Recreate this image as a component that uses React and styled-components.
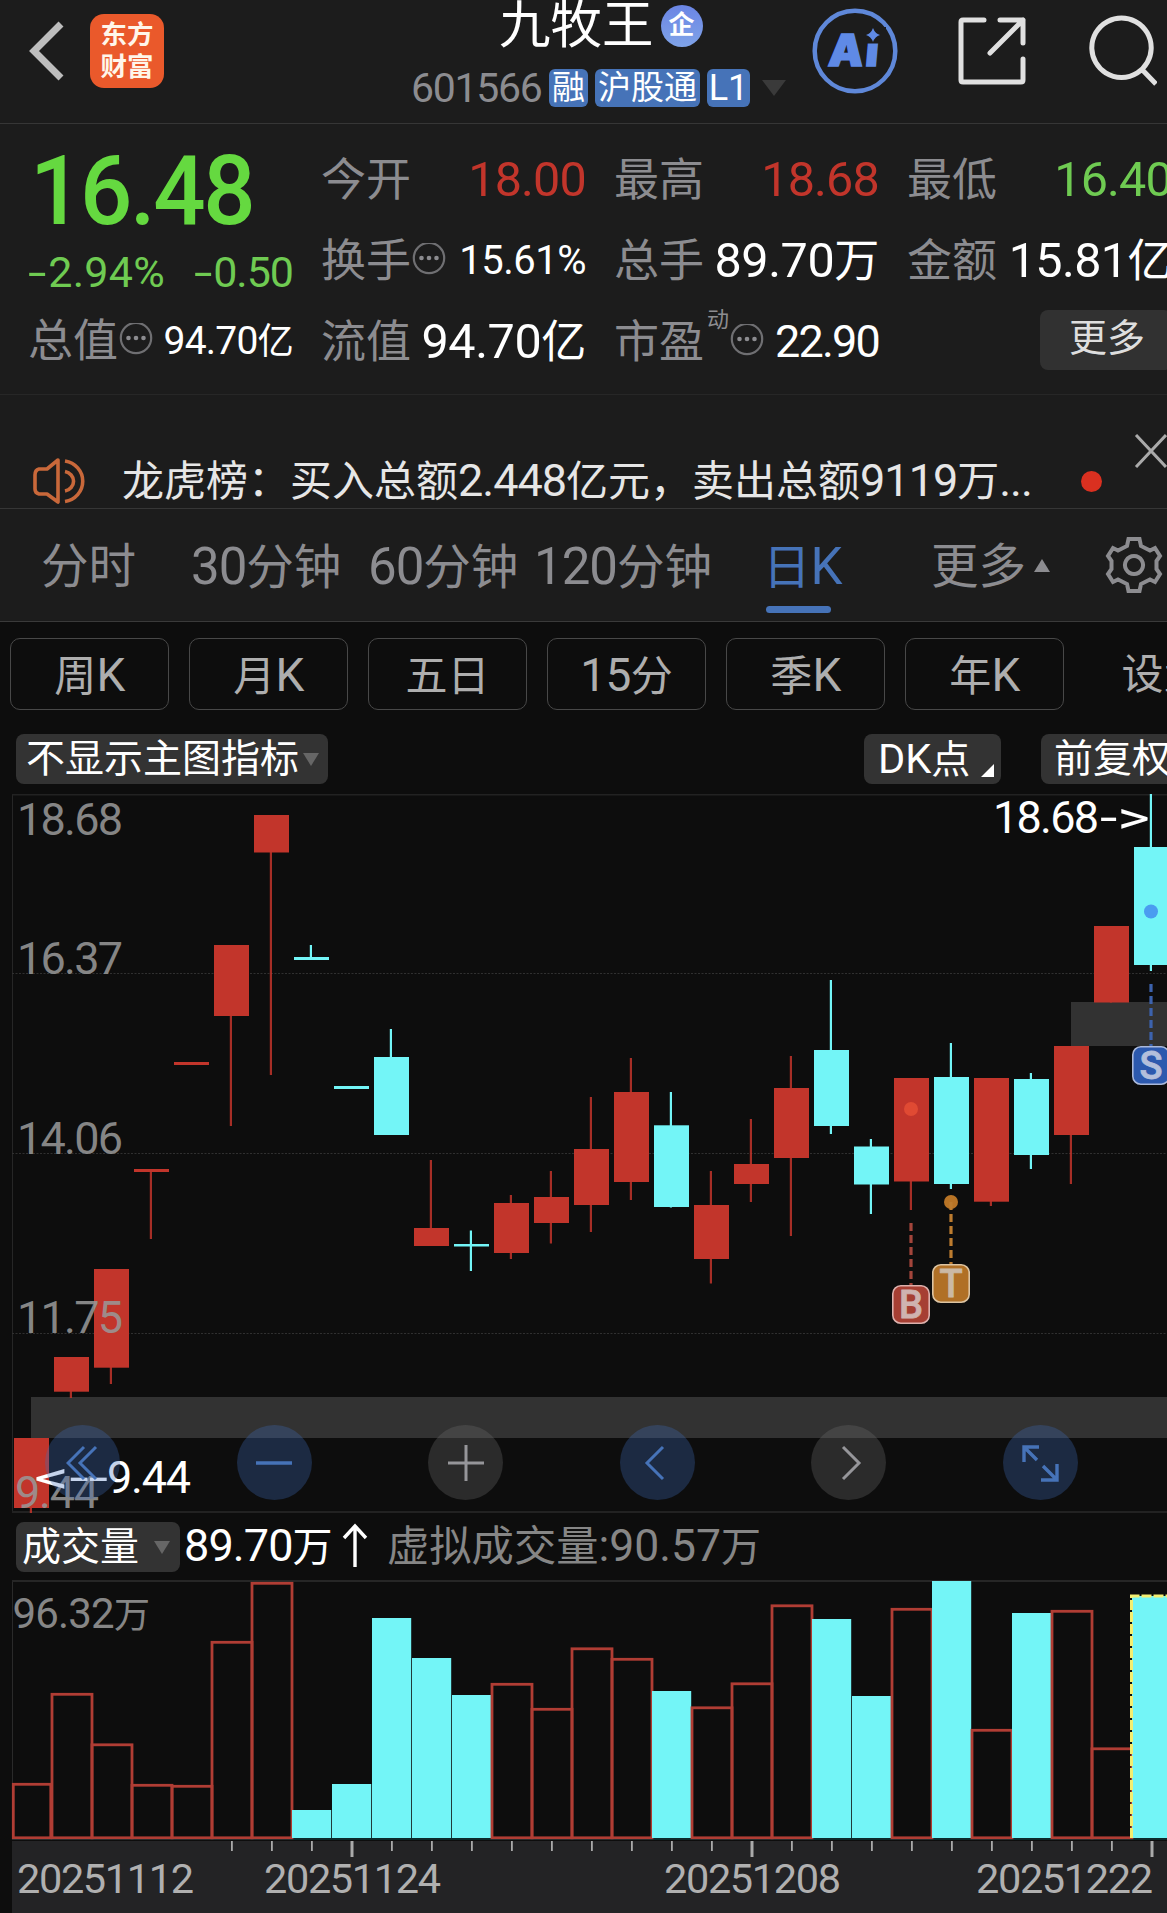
import React from "react";
import styled, { createGlobalStyle } from "styled-components";

const RED = "#c2352b";
const CYAN = "#73f5f7";
const BLUE = "#4673b8";
const GREY = "#8c8c90";
const FONT = `"Roboto", "Noto Sans CJK SC", sans-serif`;

const Global = createGlobalStyle`
  * { box-sizing: border-box; }
  html, body { margin: 0; padding: 0; background: #0d0d0d; }
  body { font-family: ${FONT}; overflow: hidden; }
  svg { display: block; flex: none; }
`;

const Screen = styled.div`
  width: 1167px;
  height: 1913px;
  overflow: hidden;
  display: flex;
  flex-direction: column;
  background: #0d0d0d;
  white-space: nowrap;
`;

/* ---------- header ---------- */
const Header = styled.header`
  height: 124px;
  flex: none;
  display: flex;
  background: #1c1c1c;
  border-bottom: 1px solid #363636;
`;
const HeaderLeft = styled.div`
  width: 412px;
  height: 102px;
  padding-left: 26px;
  display: flex;
  align-items: center;
  gap: 24px;
`;
const BrandLogo = styled.div`
  width: 74px;
  height: 74px;
  border-radius: 14px;
  background: #ea592b;
  color: #fff6ea;
  font: 700 26.5px/32px "Noto Sans CJK SC", sans-serif;
  display: flex;
  flex-direction: column;
  align-items: center;
  justify-content: center;
  padding-bottom: 4px;
`;
const TitleBlock = styled.div`
  width: 390px;
  display: flex;
  flex-direction: column;
`;
const TitleRow = styled.div`
  height: 52px;
  padding-left: 87px;
  display: flex;
  align-items: center;
  color: #fff;
  font-size: 51.5px;
  line-height: 52px;
`;
const VerifiedBadge = styled.span`
  width: 42px;
  height: 42px;
  margin-left: 7px;
  border-radius: 50%;
  background: linear-gradient(#6b85e4, #7fa3e8);
  font-size: 26px;
  font-weight: 700;
  line-height: 40px;
  text-align: center;
`;
const CodeRow = styled.div`
  height: 38px;
  margin-top: 17px;
  display: flex;
  align-items: center;
  gap: 7px;
`;
const Code = styled.span`
  width: 130px;
  color: ${GREY};
  font-size: 41px;
  line-height: 36px;
  letter-spacing: -1.3px;
  text-indent: -1px;
`;
const Tag = styled.span`
  height: 38px;
  width: ${(p) => p.$w}px;
  border-radius: 6px;
  background: ${BLUE};
  color: #fff;
  font-size: ${(p) => p.$size || 33}px;
  line-height: 38px;
  text-align: center;
`;
const HeaderIcons = styled.div`
  height: 102px;
  display: flex;
  align-items: center;
  gap: 59px;
  padding-left: 10px;
`;

/* ---------- quote ---------- */
const Quote = styled.section`
  height: 271px;
  flex: none;
  display: grid;
  grid-template-columns: repeat(4, 265px);
  column-gap: 28px;
  padding: 15px 0 0 28px;
  background: #1c1c1c;
  border-bottom: 1px solid #272727;
`;
const QuoteColumn = styled.div`
  display: flex;
  flex-direction: column;
`;
const Price = styled.div`
  height: 101px;
  padding-left: 2px;
  color: #65d940;
  font-size: 97px;
  font-weight: 500;
  line-height: 105px;
  letter-spacing: -2.5px;
  transform: scaleX(0.95);
  transform-origin: left;
`;
const Changes = styled.div`
  height: 61px;
  display: flex;
  justify-content: space-between;
  align-items: center;
  color: #6fcb52;
  font-size: 43px;
  padding: 3px 0 0 0;
`;
const Change = styled.span`
  letter-spacing: ${(p) => p.$ls}px;
`;
const Hyphen = styled.span`
  display: inline-block;
  transform: scaleX(1.55);
  transform-origin: left;
  margin-right: 8px;
`;
const Cell = styled.div`
  height: ${(p) => p.$h || 81}px;
  display: flex;
  align-items: center;
  line-height: 60px;
`;
const Label = styled.span`
  color: ${GREY};
  font-size: 45px;
  padding-top: 2px;
  margin-right: ${(p) => p.$mr || 0}px;
`;
const Value = styled.span`
  margin-left: auto;
  color: ${(p) => p.$color || "#fff"};
  font-size: ${(p) => p.$size || 48.5}px;
  letter-spacing: ${(p) => p.$ls ?? -0.8}px;
  padding-top: 1px;
`;
const Unit = styled.span`
  font-size: 0.93em;
`;
const Sup = styled.span`
  align-self: flex-start;
  margin: -3px 1px 0 3px;
  color: ${GREY};
  font-size: 22px;
  line-height: 44px;
`;
const MoreButton = styled.div`
  width: 150px;
  height: 60px;
  margin: -3px 0 0 133px;
  padding-left: 29px;
  border-radius: 8px;
  background: #313131;
  color: #dedede;
  font-size: 38px;
  line-height: 57px;
`;

/* ---------- notice ---------- */
const Notice = styled.section`
  height: 114px;
  flex: none;
  display: flex;
  padding: 58px 0 0 31px;
  background: #1c1c1c;
  border-bottom: 1px solid #363636;
`;
const NoticeText = styled.div`
  width: 930px;
  flex: none;
  margin-left: 33px;
  height: 56px;
  color: #e6e6e6;
  font-size: 42px;
  line-height: 55px;
`;
const NoticeNum = styled.span`
  font-size: 45px;
  letter-spacing: -1px;
`;
const UnreadDot = styled.i`
  width: 21px;
  height: 21px;
  margin: 18px 42px 0 29px;
  flex: none;
  border-radius: 50%;
  background: #da3020;
`;

/* ---------- tabs ---------- */
const Tabs = styled.nav`
  height: 113px;
  flex: none;
  display: flex;
  align-items: center;
  background: #1c1c1c;
  border-bottom: 1px solid #3a3a3a;
`;
const Tab = styled.div`
  width: ${(p) => p.$w}px;
  margin-left: ${(p) => p.$gap}px;
  height: 100%;
  flex: none;
  display: flex;
  flex-direction: column;
  color: ${(p) => (p.$active ? BLUE : GREY)};
  font-size: 47.5px;
  line-height: 60px;
  padding-top: 28px;
  &::after {
    content: "";
    display: ${(p) => (p.$active ? "block" : "none")};
    width: 65px;
    height: 7px;
    margin: 8px 0 0 3px;
    border-radius: 4px;
    background: ${BLUE};
  }
`;
const TabNum = styled.span`
  font-size: 51px;
  letter-spacing: -1px;
`;
const Triangle = styled.i`
  width: 0;
  height: 0;
  flex: none;
  border-left: ${(p) => p.$w / 2}px solid transparent;
  border-right: ${(p) => p.$w / 2}px solid transparent;
  border-${(p) => (p.$up ? "bottom" : "top")}: ${(p) => p.$h}px solid ${(p) => p.$color};
  margin-left: ${(p) => p.$ml || 0}px;
`;

/* ---------- periods / indicators ---------- */
const Periods = styled.div`
  height: 98px;
  flex: none;
  display: flex;
  gap: 20px;
  padding: 16px 0 0 10px;
`;
const Period = styled.div`
  width: 159px;
  height: 72px;
  flex: none;
  border: 1.5px solid ${(p) => (p.$plain ? "transparent" : "#484848")};
  border-radius: 10px;
  color: #aeaeae;
  font-size: 42px;
  line-height: 72px;
  text-align: center;
`;
const PeriodLatin = styled.span`
  font-size: 46px;
  letter-spacing: -0.6px;
`;
const Toolbar = styled.div`
  height: 74px;
  flex: none;
  display: flex;
  align-items: flex-start;
  padding: 14px 0 0 16px;
`;
const Chip = styled.div`
  width: ${(p) => p.$w}px;
  height: 50px;
  flex: none;
  margin-left: ${(p) => p.$ml || 0}px;
  padding-left: ${(p) => p.$pl}px;
  display: flex;
  align-items: center;
  border-radius: 8px;
  background: #333;
  color: #fff;
  font-size: 39px;
  line-height: 49px;
`;
const ChipLatin = styled.span`
  font-size: 41.5px;
`;
const Corner = styled.i`
  width: 0;
  height: 0;
  align-self: flex-end;
  margin: 0 0 7px 11px;
  border-left: 13px solid transparent;
  border-bottom: 13px solid #fff;
`;

/* ---------- charts ---------- */
const ChartArea = styled.section`
  position: relative;
  height: 720px;
  flex: none;
`;
const ChartNav = styled.div`
  position: absolute;
  left: 45px;
  top: 631px;
  display: flex;
  gap: 116.6px;
`;
const NavButton = styled.div`
  width: 75px;
  height: 75px;
  border-radius: 50%;
  display: flex;
  align-items: center;
  justify-content: center;
  background: ${(p) => (p.$off ? "rgba(113,113,113,.3)" : "rgba(63,110,190,.3)")};
  color: ${(p) => (p.$off ? "#96969a" : "#4673b8")};
`;
const VolumeHeader = styled.div`
  height: 66px;
  flex: none;
  display: flex;
  padding: 8px 0 0 16px;
  line-height: 48px;
`;
const VolumeValue = styled.span`
  width: 207px;
  flex: none;
  padding-left: 4px;
  color: #fff;
  font-size: 45px;
  letter-spacing: -0.9px;
  display: flex;
`;
const VolumeForecast = styled.span`
  color: #868686;
  font-size: 42.3px;
`;
const ForecastNum = styled.span`
  font-size: 44.5px;
`;
const Small = styled.span`
  font-size: 40px;
`;

const MoreDots = () => (
  <svg width="34" height="36" viewBox="0 0 34 36">
    <circle cx="17" cy="15" r="15.2" fill="none" stroke="#6f6f72" strokeWidth="2.2" />
    {[9.5, 17, 24.5].map((x) => <circle key={x} cx={x} cy="15" r="2.3" fill="#8c8c90" />)}
  </svg>
);

const Stroke = ({ w, h, d, sw = 3, color = "currentColor", ...rest }) => (
  <svg width={w} height={h} viewBox={`0 0 ${w} ${h}`} fill="none" stroke={color} strokeWidth={sw} {...rest}>
    <path d={d} />
  </svg>
);

/* [up, high, bodyTop, bodyBottom, low] */
const CANDLES = [
  [1, 1438, 1438, 1508, 1513], [1, 1357, 1357, 1391.7, 1398], [1, 1269, 1269, 1367.7, 1384],
  [1, 1169, 1169, 1172, 1239], [1, 1062, 1062, 1065, 1065], [1, 945, 945, 1016, 1126],
  [1, 815, 815, 852.5, 1075], [0, 945, 957, 960, 960], [0, 1086, 1086, 1089, 1089],
  [0, 1029, 1057, 1135, 1135], [1, 1160, 1228, 1246, 1246], [0, 1230.5, 1244, 1246.5, 1271],
  [1, 1195, 1203, 1253, 1259], [1, 1171, 1197, 1223, 1243.5], [1, 1097, 1149, 1205, 1232],
  [1, 1058, 1092, 1182, 1200], [0, 1092, 1125.3, 1207, 1207.5], [1, 1171, 1205, 1259, 1283.5],
  [1, 1119, 1164, 1184, 1202], [1, 1056, 1088, 1158, 1236], [0, 980, 1050, 1126, 1134],
  [0, 1139, 1146.5, 1184.5, 1214], [1, 1078, 1078, 1181.5, 1210], [0, 1043, 1077, 1184, 1189],
  [1, 1078, 1078, 1201.7, 1206], [0, 1073, 1079, 1155, 1169], [1, 1046, 1046, 1135, 1184],
  [1, 926, 926, 1002.5, 1002.5], [0, 794, 847, 965, 971],
];
const VOLUME_TOP = [1783, 1693, 1743.5, 1784, 1785, 1641, 1582, 1810, 1784, 1618, 1658, 1695, 1683, 1708,
  1647.5, 1658, 1691, 1706.5, 1682.5, 1604.5, 1619, 1696, 1608, 1581, 1729, 1613, 1610, 1747.5, 1596];
const VOLUME_DOWN = [7, 8, 9, 10, 11, 16, 20, 21, 23, 25, 28];
const MAJOR_TICKS = [8, 18, 28];
const cx = (i) => 31 + i * 40;

const MARKS = [
  { t: "S", x: 1151, y: 1046, from: 984, fill: "#2c59ae", edge: "#a9b8da", line: "#3c62ad", ink: "#b3bfdb" },
  { t: "B", x: 911, y: 1285, from: 1223, fill: "#a63f33", edge: "#dcb0ac", line: "#a3453b", ink: "#cfb3b0" },
  { t: "T", x: 951, y: 1264, from: 1202, fill: "#b07026", edge: "#dcc4a2", line: "#bd7c2f", ink: "#cbb9a5" },
];
const PRICES = [["18.68", 17, 835, 106], ["16.37", 17, 974, 106], ["14.06", 17, 1154, 106],
  ["11.75", 17, 1333, 106], ["9.44", 15, 1508, 84]];

const CandleChart = () => (
  <svg width="1167" height="720" viewBox="0 794 1167 720" fontFamily={FONT} fontSize="45">
    <path d="M12.5 795V1513" stroke="#262626" />
    <path d="M12 794.500H1167M12 1512H1167" stroke="#222" strokeWidth="2" />
    <path d="M12 973.5H1167M12 1153.5H1167M12 1333.5H1167" stroke="#303030" strokeDasharray="2 1.5" />
    <rect x="31" y="1397" width="1136" height="41" fill="#323232" />
    <rect x="1071" y="1002" width="96" height="44" fill="#323232" />
    {CANDLES.map(([up, h, t, b, l], i) => (
      <g key={i} fill={up ? RED : CYAN}>
        <rect x={cx(i) - 1.2} y={h} width="2.2" height={l - h} opacity={up ? 0.85 : 1} />
        <rect x={cx(i) - 17} y={t} width="35" height={b - t} />
      </g>
    ))}
    <circle cx="1151" cy="911.5" r="7" fill="#4a9cf0" />
    <circle cx="911" cy="1109" r="7" fill="#e04a33" />
    <circle cx="951" cy="1202" r="7" fill="#b87426" />
    {MARKS.map((m) => (
      <g key={m.t}>
        <path d={`M${m.x} ${m.from}V${m.y}`} stroke={m.line} strokeWidth="3.2" strokeDasharray="8 4" />
        <rect x={m.x - 18.2} y={m.y + 0.8} width="36.4" height="37.4" rx="8" fill={m.fill} stroke={m.edge} strokeWidth="1.6" />
        <text x={m.x} y={m.y + 33} fontSize="38" fontWeight="500" textAnchor="middle" fill={m.ink} stroke={m.ink} strokeWidth="0.8">{m.t}</text>
      </g>
    ))}
    {PRICES.map(([p, x, y, len]) => (
      <text key={p} x={x} y={y} textLength={len} fill="#999" opacity="0.86">{p}</text>
    ))}
    <g fill="#fff">
      <text x="993" y="833" textLength="106">18.68</text>
      <text x="1100" y="833" textLength="50" lengthAdjust="spacingAndGlyphs">-&gt;</text>
      <text x="34" y="1493" textLength="74" lengthAdjust="spacingAndGlyphs">&lt;--</text>
      <text x="107" y="1493" textLength="84">9.44</text>
    </g>
  </svg>
);

const DATES = [["20251112", 17], ["20251124", 264], ["20251208", 664], ["20251222", 976]];

const VolumeChart = () => (
  <svg width="1167" height="333" viewBox="0 1580 1167 333" fontFamily={FONT}>
    <path d="M12.5 1581V1838" stroke="#2a2a2a" />
    <path d="M12 1581H1167" stroke="#262626" strokeWidth="2" />
    <path d="M12 1839H1167" stroke="#0c2b2d" strokeWidth="2" />
    {VOLUME_TOP.map((top, i) =>
      VOLUME_DOWN.includes(i) ? (
        <rect key={i} x={cx(i) - 19} y={top} width="39.2" height={1838 - top} fill={CYAN} />
      ) : (
        <rect key={i} x={i ? cx(i) - 19 : 13.3} y={top + 1.3} width={i ? 40 : 37.5} height={1836.5 - top}
          fill="none" stroke="#b03d34" strokeWidth="2.8" />
      )
    )}
    <path d="M1131.5 1838V1596H1167" fill="none" stroke="#f3ee72" strokeWidth="3" strokeDasharray="10 2" />
    <text x="12.500" y="1628" fontSize="42" fill="#868686" textLength="102">96.32</text>
    <text x="114" y="1628" fontSize="36" fill="#868686">万</text>
    <rect x="12" y="1841" width="1155" height="72" fill="#232325" />
    {CANDLES.map((_, i) => {
      if (i < 5) return null;
      const major = MAJOR_TICKS.includes(i);
      return <rect key={i} x={cx(i) - (major ? 0.5 : 0)} y="1841" width={major ? 3 : 1.8} height={major ? 16 : 10} fill="#aaa" />;
    })}
    {DATES.map(([d, x]) => (
      <text key={d} x={x} y="1893" fontSize="41.5" fill="#b0b0b0" textLength="177">{d}</text>
    ))}
  </svg>
);

export default function App() {
  return (
    <Screen>
      <Global />
      <Header>
        <HeaderLeft>
          <Stroke w={40} h={62} sw={7} color="#bdbdbd" d="M35 4L8 31L35 58" strokeLinecap="butt" />
          <BrandLogo><span>东方</span><span>财富</span></BrandLogo>
        </HeaderLeft>
        <TitleBlock>
          <TitleRow>九牧王<VerifiedBadge>企</VerifiedBadge></TitleRow>
          <CodeRow>
            <Code>601566</Code>
            <Tag $w={39}>融</Tag>
            <Tag $w={105}>沪股通</Tag>
            <Tag $w={43} $size={36}>L1</Tag>
            <Triangle $w={24} $h={16} $color="#3a3a3a" $ml={5} />
          </CodeRow>
        </TitleBlock>
        <HeaderIcons>
          <svg width="86" height="88" viewBox="812 7 86 88">
            <circle cx="855" cy="51" r="40.3" fill="none" stroke="#5f88d9" strokeWidth="4.5" />
            <g transform="translate(827.5 65.500) skewX(-5)">
              <text x="0 37" y="0" fontFamily="Inter, sans-serif" fontSize="44" fontWeight="900" fill="#5f8ae6"
                stroke="#5f8ae6" strokeWidth="1.5">Ai</text>
            </g>
            <rect x="862" y="27" width="24" height="16.5" fill="#1c1c1c" />
            <path d="M873 28Q875 33.500 880 35Q875 36.500 873 42Q871 36.500 866 35Q871 33.500 873 28Z" fill="#5f8ae6" />
          </svg>
          <Stroke w={70} h={70} sw={5} color="#e0e0e0" strokeLinecap="round" strokeLinejoin="round"
            d="M27 4H6Q4 4 4 6V64Q4 66 6 66H64Q66 66 66 64V43M43 4H66V27M66 4L33 37" />
          <Stroke w={71} h={76} sw={5} color="#e0e0e0" d="M35.500 5a29.700 29.700 0 1 0 .01 0M56 56.500L70 71" />
        </HeaderIcons>
      </Header>

      <Quote>
        <QuoteColumn>
          <Price>16.48</Price>
          <Changes>
            <Change $ls={0.3}><Hyphen>-</Hyphen>2.94%</Change>
            <Change $ls={-1}><Hyphen>-</Hyphen>0.50</Change>
          </Changes>
          <Cell $h={80}><Label $mr={1}>总值</Label><MoreDots /><Value $size={39}>94.70<Unit>亿</Unit></Value></Cell>
        </QuoteColumn>
        <QuoteColumn>
          <Cell><Label>今开</Label><Value $color={RED}>18.00</Value></Cell>
          <Cell><Label $mr={1}>换手</Label><MoreDots /><Value $size={40} $ls={-0.5}>15.61%</Value></Cell>
          <Cell><Label>流值</Label><Value $ls={-0.4}>94.70<Unit>亿</Unit></Value></Cell>
        </QuoteColumn>
        <QuoteColumn>
          <Cell><Label>最高</Label><Value $color={RED}>18.68</Value></Cell>
          <Cell><Label>总手</Label><Value $ls={-0.4}>89.70<Unit>万</Unit></Value></Cell>
          <Cell><Label>市盈</Label><Sup>动</Sup><MoreDots /><Value $size={45} $ls={-1.8}>22.90</Value></Cell>
        </QuoteColumn>
        <QuoteColumn>
          <Cell><Label>最低</Label><Value $color="#6fcb52">16.40</Value></Cell>
          <Cell><Label>金额</Label><Value $ls={-0.6}>15.81<Unit>亿</Unit></Value></Cell>
          <Cell><MoreButton>更多</MoreButton></Cell>
        </QuoteColumn>
      </Quote>

      <Notice>
        <Stroke w={58} h={56} sw={3.6} color="#c9683a" strokeLinejoin="round"
          d="M27 7L16 16H8Q4 17 4 22V36Q4 40 8 41H16L27 49ZM34 8A21 20.500 0 0 1 34 48.500M34 18.500A11 10 0 0 1 34 38" />
        <NoticeText>
          龙虎榜：买入总额<NoticeNum>2.448</NoticeNum>亿元，卖出总额<NoticeNum>9119</NoticeNum>万<NoticeNum>...</NoticeNum>
        </NoticeText>
        <UnreadDot />
        <Stroke w={34} h={34} sw={3} color="#aaa" d="M2 1L32 33M32 1L2 33" transform="translate(-10 -19)" />
      </Notice>

      <Tabs>
        <Tab $w={94} $gap={41}>分时</Tab>
        <Tab $w={150} $gap={56}><span><TabNum>30</TabNum>分钟</span></Tab>
        <Tab $w={150} $gap={27}><span><TabNum>60</TabNum>分钟</span></Tab>
        <Tab $w={176} $gap={16}><span><TabNum>120</TabNum>分钟</span></Tab>
        <Tab $w={76} $gap={53} $active><span>日<TabNum>K</TabNum></span></Tab>
        <Tab $w={94} $gap={92}>更多</Tab>
        <Triangle $w={16} $h={13} $color={GREY} $up $ml={9} />
        <Stroke w={60} h={60} sw={4} color={GREY} style={{ marginLeft: 54 }}
          d="M24.500 4H35.500L37 11L46 15.500L51 13L56 21L52.500 26V34L56 39L51 47L46 44.500L37 49L35.500 56H24.500L23 49L14 44.500L9 47L4 39L7.500 34V26L4 21L9 13L14 15.500L23 11ZM30 21a9 9 0 1 0 .01 0" />
      </Tabs>

      <Periods>
        {[["周", "K"], ["月", "K"], ["五日", ""], ["", "15", "分"], ["季", "K"], ["年", "K"]].map(([a, b, c]) => (
          <Period key={a + b}>{a}<PeriodLatin>{b}</PeriodLatin>{c}</Period>
        ))}
        <Period $plain>设置</Period>
      </Periods>

      <Toolbar>
        <Chip $w={312} $pl={10}>不显示主图指标<Triangle $w={16} $h={13} $color="#666" $ml={4} /></Chip>
        <Chip $w={137} $ml={536} $pl={14}><span><ChipLatin>DK</ChipLatin>点</span><Corner /></Chip>
        <Chip $w={150} $ml={40} $pl={13}>前复权</Chip>
      </Toolbar>

      <ChartArea>
        <CandleChart />
        <ChartNav>
          <NavButton><Stroke w={34} h={36} d="M18 2L2 18L18 34M30 2L14 18L30 34" /></NavButton>
          <NavButton><Stroke w={38} h={36} d="M1 18H37" sw={3.5} /></NavButton>
          <NavButton $off><Stroke w={38} h={38} d="M1 19H37M19 1V37" /></NavButton>
          <NavButton><Stroke w={26} h={36} d="M19 2L3 18L19 34" /></NavButton>
          <NavButton $off><Stroke w={26} h={36} d="M7 2L23 18L7 34" /></NavButton>
          <NavButton><Stroke w={40} h={40} sw={3.4} d="M4 19V4H19M4 4L17 17M37 21V37H21M37 37L23 23" /></NavButton>
        </ChartNav>
      </ChartArea>

      <VolumeHeader>
        <Chip $w={164} $pl={6}>成交量<Triangle $w={16} $h={13} $color="#666" $ml={15} /></Chip>
        <VolumeValue>
          <span>89.70<Small>万</Small></span>
          <Stroke w={30} h={48} sw={3.4} color="#fff" d="M15 45V4M4 16L15 4L26 16" style={{ marginLeft: 8 }} />
        </VolumeValue>
        <VolumeForecast>虚拟成交量<ForecastNum>:90.57</ForecastNum><Small>万</Small></VolumeForecast>
      </VolumeHeader>
      <VolumeChart />
    </Screen>
  );
}
